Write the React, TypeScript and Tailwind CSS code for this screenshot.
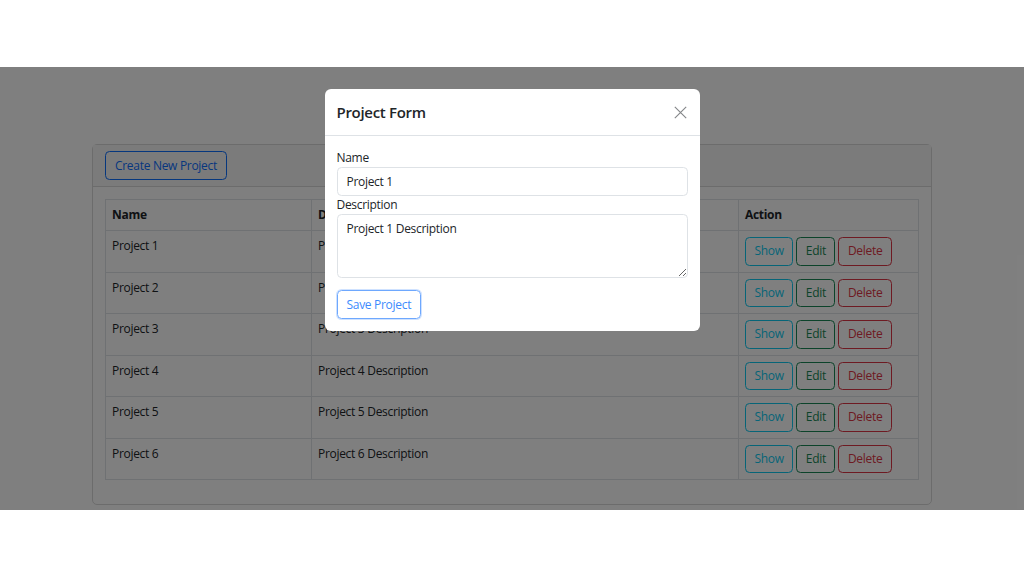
import React from 'react';

const projects = [1, 2, 3, 4, 5, 6];

const font = "font-['Open_Sans','Noto_Sans',sans-serif]";

const App = () => {
  return (
    <div className={`flex h-[578px] w-[1024px] flex-col bg-white text-[12px] leading-[18px] tracking-[-0.3px] text-[#212529] ${font}`}>
      <div className="h-[67px] shrink-0" />
      <div className="relative h-[443px] shrink-0 overflow-hidden bg-white">
        {/* page */}
        <div className="px-[92px] pt-[77px]">
          <div className="rounded-[5px] border border-[#d9d9d9] bg-white">
            <div className="border-b border-[#d9d9d9] bg-[#f7f7f7] px-[12px] py-[6px]">
              <button className="rounded-[4.5px] border border-[#0d6efd] px-[9px] py-[4.5px] text-[#0d6efd]">
                Create New Project
              </button>
            </div>
            <div className="p-[12px]">
              <table className="mb-[12px] w-full border-collapse border border-[#dee2e6]">
                <thead>
                  <tr>
                    <th className="w-[206px] border border-[#dee2e6] px-[6px] py-[6px] text-left font-bold">Name</th>
                    <th className="w-[427px] border border-[#dee2e6] px-[6px] py-[6px] text-left font-bold">Description</th>
                    <th className="border border-[#dee2e6] px-[6px] py-[6px] text-left font-bold">Action</th>
                  </tr>
                </thead>
                <tbody>
                  {projects.map((n) => (
                    <tr key={n}>
                      <td className="border border-[#dee2e6] px-[6px] py-[6px] align-top">Project {n}</td>
                      <td className="border border-[#dee2e6] px-[6px] py-[6px] align-top">Project {n} Description</td>
                      <td className="border border-[#dee2e6] px-[6px] py-[6px] align-top">
                        <div className="flex gap-[3px]">
                          <button className="rounded-[4.5px] border border-[#0dcaf0] px-[8.5px] py-[4.25px] text-[#0dcaf0]">Show</button>
                          <button className="rounded-[4.5px] border border-[#198754] px-[8.5px] py-[4.25px] text-[#198754]">Edit</button>
                          <button className="rounded-[4.5px] border border-[#dc3545] px-[8.5px] py-[4.25px] text-[#dc3545]">Delete</button>
                        </div>
                      </td>
                    </tr>
                  ))}
                </tbody>
              </table>
            </div>
          </div>
        </div>

        {/* backdrop + modal */}
        <div className="absolute inset-0 flex items-start justify-center bg-black/50 pt-[22px]">
          <div className="w-[375px] rounded-[6px] bg-white">
            <div className="flex items-center justify-between border-b border-[#dee2e6] p-[12px]">
              <h5 className="text-[15px] font-semibold leading-[22px] text-[#212529]">Project Form</h5>
              <button className="mr-[1px] text-[#212529] opacity-55">
                <svg width="13" height="13" viewBox="0 0 16 16" fill="none" stroke="currentColor" strokeWidth="1.4">
                  <path d="M1 1l14 14M15 1L1 15" />
                </svg>
              </button>
            </div>
            <div className="px-[12px] pb-[12px] pt-[13px]">
              <label className="block">Name</label>
              <input
                className="block w-full rounded-[4.5px] border border-[#dee2e6] px-[9px] py-[4.5px] text-[#212529] outline-none"
                defaultValue="Project 1"
              />
              <label className="block">Description</label>
              <textarea
                className="block h-[64px] w-full resize-y rounded-[4.5px] border border-[#dee2e6] px-[9px] py-[4.5px] text-[#212529] outline-none"
                defaultValue="Project 1 Description"
              />
              <button className="mt-[12px] rounded-[4.5px] border border-[#6ea8fe] px-[9px] py-[4.5px] text-[#3d8bfd] shadow-[0_0_0_1px_#cfe2ff]">
                Save Project
              </button>
            </div>
          </div>
        </div>
      </div>
      <div className="flex-1" />
    </div>
  );
};

export default App;
